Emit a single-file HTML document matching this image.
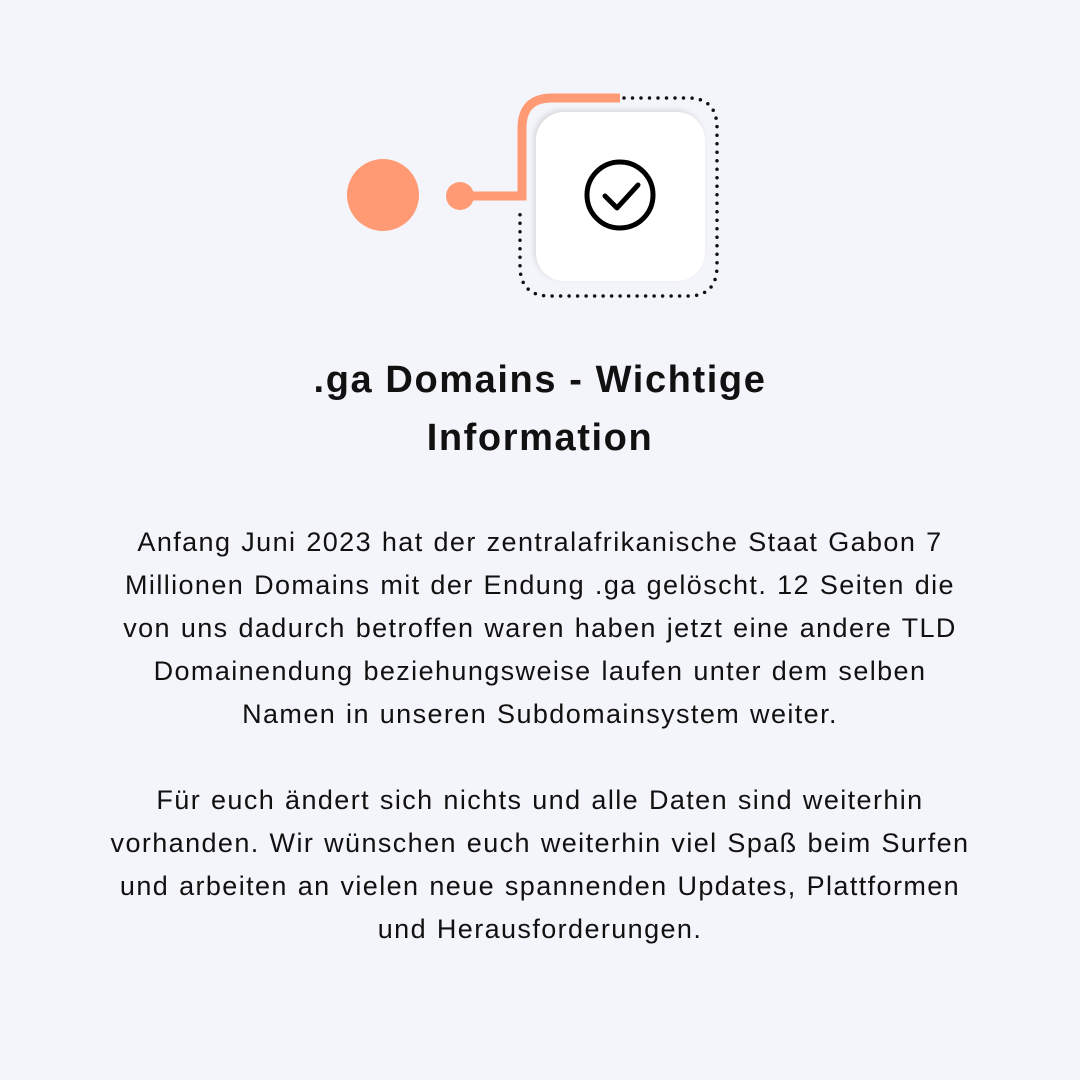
<!DOCTYPE html>
<html><head><meta charset="utf-8"><style>
html,body{margin:0;padding:0;}
body{width:1080px;height:1080px;background:#f4f5fb;position:relative;overflow:hidden;font-family:"Liberation Sans",sans-serif;color:#111;}
.t{position:absolute;left:0;width:1080px;text-align:center;white-space:nowrap;}
h1{font-size:38px;font-weight:bold;line-height:58px;margin:0;top:351px;letter-spacing:1.6px;}
p{font-size:27px;line-height:43px;margin:0;letter-spacing:1.4px;word-spacing:1px;}
.box{position:absolute;left:536px;top:112px;width:169px;height:169px;background:#fff;border-radius:28px;box-shadow:-2px -2px 6px rgba(0,0,0,0.12);}
</style></head><body>
<svg width="1080" height="320" style="position:absolute;left:0;top:0">
<circle cx="383" cy="195" r="36" fill="#ff9a74"/>
<circle cx="460" cy="196" r="14" fill="#ff9a74"/>
<path d="M460 196 H522 V128 Q522 98 552 98 H620" fill="none" stroke="#ff9a74" stroke-width="9"/>
<path d="M624 98 H688 Q717 98 717 128 V266 Q717 296 688 296 H550 Q520 296 520 266 V207" fill="none" stroke="#111" stroke-width="3.5" stroke-dasharray="0 8.5" stroke-linecap="round"/>
</svg>
<div class="box"></div>
<svg width="1080" height="320" style="position:absolute;left:0;top:0">
<circle cx="620" cy="195" r="33" fill="none" stroke="#000" stroke-width="5"/>
<path d="M605 196 L617 208 L638 185" fill="none" stroke="#000" stroke-width="5" stroke-linecap="round" stroke-linejoin="round"/>
</svg>
<h1 class="t">.ga Domains - Wichtige<br>Information</h1>
<p class="t" style="top:521px">Anfang Juni 2023 hat der zentralafrikanische Staat Gabon 7<br>Millionen Domains mit der Endung .ga gelöscht. 12 Seiten die<br>von uns dadurch betroffen waren haben jetzt eine andere TLD<br>Domainendung beziehungsweise laufen unter dem selben<br>Namen in unseren Subdomainsystem weiter.</p>
<p class="t" style="top:779px">Für euch ändert sich nichts und alle Daten sind weiterhin<br>vorhanden. Wir wünschen euch weiterhin viel Spaß beim Surfen<br>und arbeiten an vielen neue spannenden Updates, Plattformen<br>und Herausforderungen.</p>
</body></html>
